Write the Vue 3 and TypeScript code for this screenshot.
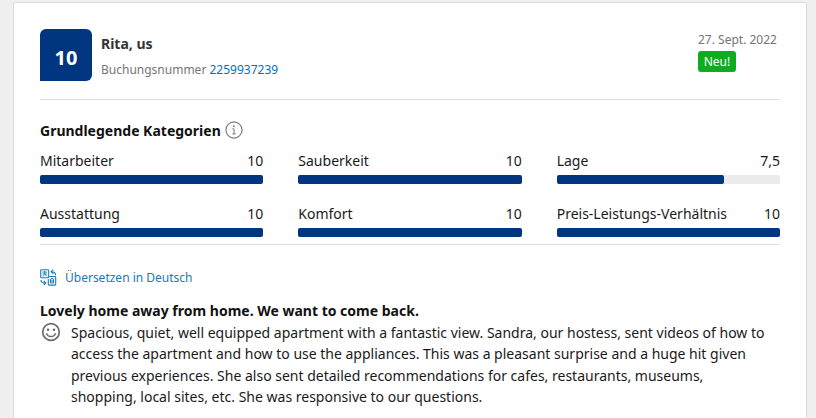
<script setup lang="ts">
interface Category {
  name: string
  score: number
}

const categories: Category[] = [
  { name: 'Mitarbeiter', score: 10 },
  { name: 'Sauberkeit', score: 10 },
  { name: 'Lage', score: 7.5 },
  { name: 'Ausstattung', score: 10 },
  { name: 'Komfort', score: 10 },
  { name: 'Preis-Leistungs-Verhältnis', score: 10 },
]

const reviewLines: string[] = [
  'Spacious, quiet, well equipped apartment with a fantastic view. Sandra, our hostess, sent videos of how to',
  'access the apartment and how to use the appliances. This was a pleasant surprise and a huge hit given',
  'previous experiences. She also sent detailed recommendations for cafes, restaurants, museums,',
  'shopping, local sites, etc. She was responsive to our questions.',
]

const formatScore = (score: number): string => String(score).replace('.', ',')
</script>

<template>
  <article class="card">
    <header class="head">
      <div class="badge">10</div>
      <div class="guest">
        <div class="name">Rita, us</div>
        <div class="booking">Buchungsnummer <a class="link">2259937239</a></div>
      </div>
      <div class="meta">
        <div class="date">27. Sept. 2022</div>
        <span class="new">Neu!</span>
      </div>
    </header>

    <section class="ratings">
      <h2 class="heading">
        <span class="heading-text">Grundlegende Kategorien</span>
        <svg class="info" viewBox="0 0 18 18">
          <circle cx="9" cy="9" r="8.1" fill="none" stroke="#777" stroke-width="1.1" />
          <circle cx="8.8" cy="5.2" r="0.9" fill="#777" />
          <path d="M7.4 7.8H9V12.7M7.3 12.9H10.8" fill="none" stroke="#777" stroke-width="1" />
        </svg>
      </h2>
      <div class="grid">
        <div v-for="c in categories" :key="c.name" class="category">
          <div class="label">
            <span>{{ c.name }}</span>
            <span class="score">{{ formatScore(c.score) }}</span>
          </div>
          <div class="track"><div class="fill" :style="{ width: c.score * 10 + '%' }"></div></div>
        </div>
      </div>
    </section>

    <a class="translate">
      <svg class="translate-icon" viewBox="0 0 17 17" fill="none" stroke="#2079b5" stroke-width="1.1">
        <rect x="0.7" y="0.7" width="8" height="8" rx="0.8" />
        <path d="M2.3 3.1H7.1M4.7 1.8V3.1M2.5 5H6.9M4.7 3.1V5L2.6 7.3M4.7 5L6.8 7.3" stroke-width="0.9" />
        <path d="M9.3 7.5H14.9Q15.7 7.5 15.7 8.3V15.3Q15.7 16.1 14.9 16.1H9.1Q8.3 16.1 8.3 15.3V10" />
        <path d="M10.5 14V11Q10.5 9.5 12 9.5T13.5 11V14M10.5 12H13.5M10.5 14H13.5" />
        <path d="M15.6 6.2Q15.6 2.7 11.3 2.7M13.4 0.7L11.1 2.7L13.4 4.8" />
        <path d="M0.9 10.9Q0.9 14.1 5.6 14.1M3.7 11.9L5.9 14.1L3.7 16.2" />
      </svg>
      <span>Übersetzen in Deutsch</span>
    </a>

    <h3 class="title">Lovely home away from home. We want to come back.</h3>
    <div class="review">
      <svg class="smile" viewBox="0 0 20 20" fill="none" stroke="#6b6b6b">
        <circle cx="10" cy="10" r="8.3" stroke-width="1.7" />
        <circle cx="7" cy="7.8" r="1.25" fill="#6b6b6b" stroke="none" />
        <circle cx="13" cy="7.8" r="1.25" fill="#6b6b6b" stroke="none" />
        <path d="M5.4 11.2Q6.6 14.5 10 14.5T14.6 11.2" stroke-width="1.4" />
      </svg>
      <p class="text">
        <span v-for="(line, i) in reviewLines" :key="i" class="line" :class="'line-' + i">{{ line }}</span>
      </p>
    </div>
  </article>
</template>

<style>
body {
  background: #f0f0f0;
  overflow: hidden;
}
</style>

<style scoped>
.card {
  box-sizing: border-box;
  height: 420px;
  margin: 2px 9px 0 13px;
  padding: 26px 26px 0;
  border: 1px solid #dcdcdc;
  border-radius: 2px;
  background: #fff;
  color: #1a1a1a;
  font-family: "Noto Sans", "Open Sans", sans-serif;
  font-size: 14px;
  white-space: nowrap;
}
.head {
  display: flex;
  box-sizing: border-box;
  height: 71px;
  border-bottom: 1px solid #dedede;
}
.badge {
  width: 52px;
  height: 52px;
  border-radius: 6px 6px 6px 0;
  background: #003580;
  color: #fff;
  font-size: 20px;
  font-weight: 700;
  line-height: 57px;
  text-align: center;
}
.guest {
  margin-left: 9px;
  padding-top: 4px;
}
.name {
  color: #333;
  font-weight: 700;
  line-height: 22px;
}
.booking {
  margin-top: 5px;
  color: #757575;
  font-size: 12px;
  line-height: 20px;
}
.link {
  color: #0071c2;
}
.meta {
  width: 82px;
  margin-left: auto;
}
.date {
  color: #757575;
  font-size: 12px;
  line-height: 22px;
}
.new {
  display: block;
  width: 38px;
  height: 21px;
  border-radius: 3px;
  background: #0fac20;
  color: #fff;
  font-size: 12px;
  line-height: 22px;
  text-align: center;
}
.ratings {
  box-sizing: border-box;
  height: 145px;
  padding-top: 19px;
  border-bottom: 1px solid #dedede;
}
.heading {
  display: flex;
  align-items: center;
  gap: 4px;
  height: 22px;
  margin: 0 0 8px;
  color: #111;
  font-size: 14px;
}
.info {
  width: 18px;
  height: 18px;
}
.grid {
  display: grid;
  grid-template-columns: repeat(3, 1fr);
  column-gap: 35px;
  row-gap: 18px;
}
.label {
  display: flex;
  justify-content: space-between;
  height: 26px;
  line-height: 23px;
}
.track {
  height: 9px;
  border-radius: 2px;
  background: #ebebeb;
}
.fill {
  height: 9px;
  border-radius: 2px;
  background: #003580;
}
.translate {
  display: flex;
  align-items: center;
  gap: 8px;
  height: 20px;
  margin-top: 22px;
  color: #2079b5;
  font-size: 12px;
}
.translate-icon {
  width: 17px;
  height: 17px;
}
.title {
  margin: 13px 0 0;
  color: #111;
  font-size: 14px;
  line-height: 22px;
}
.review {
  display: flex;
  gap: 10px;
}
.smile {
  width: 20px;
  height: 20px;
  margin-left: 1px;
}
.text {
  margin: 0;
}
.line {
  display: block;
  line-height: 21.3px;
}
</style>
